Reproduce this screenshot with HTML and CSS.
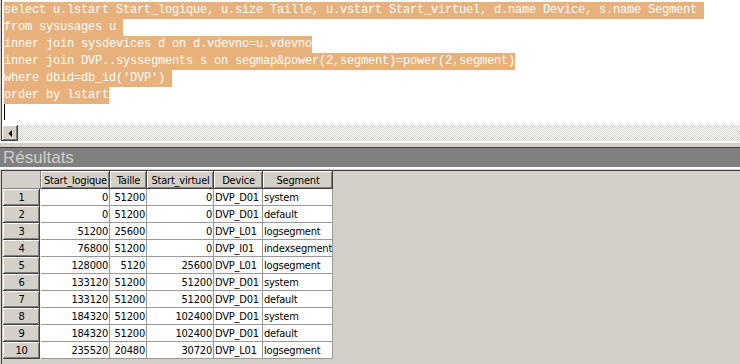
FILE: index.html
```html
<!DOCTYPE html>
<html lang="fr">
<head>
<meta charset="UTF-8">
<title>Analyseur de requêtes</title>
<link rel="stylesheet" href="styles.css">
</head>
<body>
<div class="editor">
<div class="line"><span class="sel">select u.lstart Start_logique, u.size Taille, u.vstart Start_virtuel, d.name Device, s.name Segment </span></div>
<div class="line"><span class="sel">from sysusages u </span></div>
<div class="line"><span class="sel">inner join sysdevices d on d.vdevno=u.vdevno</span></div>
<div class="line"><span class="sel">inner join DVP..syssegments s on segmap&amp;power(2,segment)=power(2,segment)</span></div>
<div class="line"><span class="sel">where dbid=db_id('DVP') </span></div>
<div class="line"><span class="sel">order by lstart</span></div>
<div class="line"><span class="caret"></span></div>
</div>
<div class="hscroll">
<div class="scroll-btn">
<svg width="4" height="7" viewBox="0 0 4 7"><path d="M4 0 L4 7 L0.5 3.5 Z" fill="#000"/></svg>
</div>
<div class="track"></div>
</div>
<div class="splitter"></div>
<div class="pane-title">Résultats</div>
<div class="pane-body">
<table class="grid">
<colgroup>
<col style="width:38px">
<col style="width:69px">
<col style="width:37px">
<col style="width:67px">
<col style="width:49px">
<col style="width:70px">
</colgroup>
<thead>
<tr>
<th class="corner"></th>
<th>Start_logique</th>
<th>Taille</th>
<th>Start_virtuel</th>
<th>Device</th>
<th>Segment</th>
</tr>
</thead>
<tbody>
<tr><th class="rownum">1</th><td class="num">0</td><td class="num">51200</td><td class="num">0</td><td>DVP_D01</td><td>system</td></tr>
<tr><th class="rownum">2</th><td class="num">0</td><td class="num">51200</td><td class="num">0</td><td>DVP_D01</td><td>default</td></tr>
<tr><th class="rownum">3</th><td class="num">51200</td><td class="num">25600</td><td class="num">0</td><td>DVP_L01</td><td>logsegment</td></tr>
<tr><th class="rownum">4</th><td class="num">76800</td><td class="num">51200</td><td class="num">0</td><td>DVP_I01</td><td>indexsegment</td></tr>
<tr><th class="rownum">5</th><td class="num">128000</td><td class="num">5120</td><td class="num">25600</td><td>DVP_L01</td><td>logsegment</td></tr>
<tr><th class="rownum">6</th><td class="num">133120</td><td class="num">51200</td><td class="num">51200</td><td>DVP_D01</td><td>system</td></tr>
<tr><th class="rownum">7</th><td class="num">133120</td><td class="num">51200</td><td class="num">51200</td><td>DVP_D01</td><td>default</td></tr>
<tr><th class="rownum">8</th><td class="num">184320</td><td class="num">51200</td><td class="num">102400</td><td>DVP_D01</td><td>system</td></tr>
<tr><th class="rownum">9</th><td class="num">184320</td><td class="num">51200</td><td class="num">102400</td><td>DVP_D01</td><td>default</td></tr>
<tr><th class="rownum">10</th><td class="num">235520</td><td class="num">20480</td><td class="num">30720</td><td>DVP_L01</td><td>logsegment</td></tr>
</tbody>
</table>
</div>
</body>
</html>
```

FILE: styles.css
```css
html, body {
    margin: 0;
    height: 100%;
    overflow: hidden;
}
body {
    background-color: #d4d0c8;
    font-family: 'DejaVu Sans Condensed', 'Liberation Sans', Arial, sans-serif;
    font-size: 11px;
    color: #000;
}
.editor {
    height: 123px;
    margin-left: 1px;
    padding: 2px 0 0 2px;
    border-left: 1px solid #404040;
    background-color: #fff;
    font-family: 'Liberation Mono', 'Courier New', monospace;
    font-size: 12px;
    letter-spacing: -0.2px;
}
.line {
    height: 17px;
    line-height: 17px;
    white-space: pre;
}
.sel {
    display: inline-block;
    height: 17px;
    background-color: #e8b07a;
    color: #fff;
}
.caret {
    display: inline-block;
    width: 1px;
    height: 16px;
    background-color: #000;
    vertical-align: top;
}
.hscroll {
    display: flex;
    height: 16px;
    margin-left: 1px;
    border-left: 1px solid #404040;
}
.scroll-btn {
    width: 16px;
    height: 16px;
    box-sizing: border-box;
    display: flex;
    align-items: center;
    justify-content: center;
    background-color: #d4d0c8;
    box-shadow: inset -1px -1px #404040, inset 1px 1px #fff, inset -2px -2px #808080;
}
.track {
    flex: 1;
    background: repeating-conic-gradient(#d4d0c8 0 25%, #fff 0 50%) 0 0 / 2px 2px;
}
.splitter {
    height: 4px;
    border-top: 2px solid #fff;
}
.pane-title {
    height: 19px;
    line-height: 19px;
    padding-left: 3px;
    border-top: 1px solid #404040;
    border-bottom: 2px solid #fff;
    margin-bottom: 1px;
    background-color: #808080;
    color: #d4d0c8;
    font-family: 'Liberation Sans', Arial, sans-serif;
    font-size: 17px;
    overflow: hidden;
}
.pane-body {
    height: 200px;
    margin-left: 1px;
    padding-left: 1px;
    border-top: 1px solid #404040;
    border-left: 1px solid #404040;
}
.grid {
    table-layout: fixed;
    border-collapse: separate;
    border-spacing: 0;
    width: 330px;
    letter-spacing: -0.2px;
}
.grid th, .grid td {
    box-sizing: border-box;
    padding: 0 1px;
    white-space: nowrap;
    overflow: hidden;
    font-weight: normal;
}
.grid thead th {
    height: 18px;
    text-align: center;
    background-color: #d4d0c8;
    box-shadow: inset -1px -1px #404040, inset 1px 1px #fff, inset -2px -2px #808080;
}
.grid thead th.corner {
    box-shadow: inset -1px -1px #808080;
}
.grid td {
    height: 17px;
    background-color: #fff;
    border-right: 1px solid #999;
    border-bottom: 1px solid #999;
}
.grid td.num {
    text-align: right;
}
.grid th.rownum {
    height: 17px;
    text-align: center;
    background-color: #d4d0c8;
    border-right: 1px solid #fff;
    box-shadow: inset -1px -1px #404040, inset 1px 1px #fff, inset -2px -2px #808080;
}
```
